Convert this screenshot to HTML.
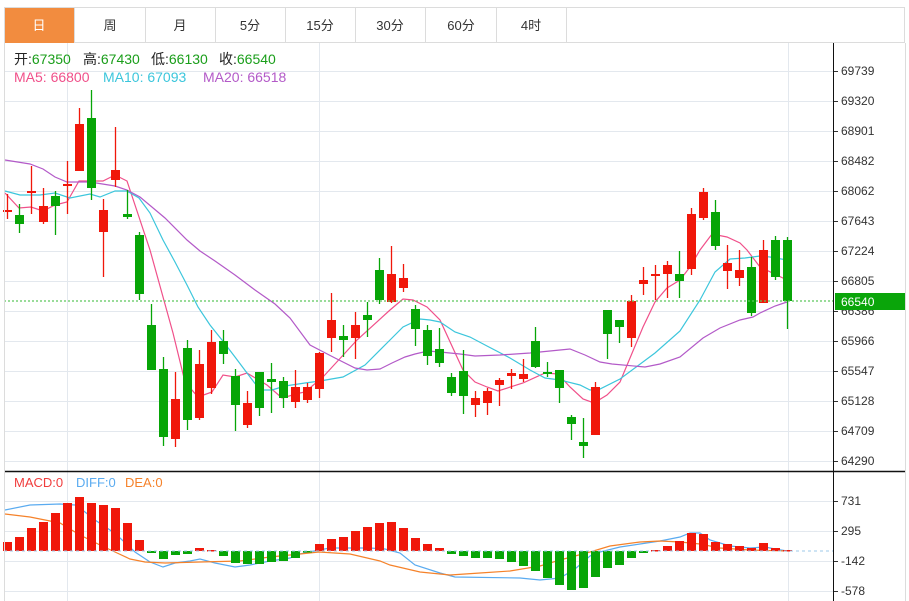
<!DOCTYPE html>
<html><head><meta charset="utf-8"><style>
html,body{margin:0;padding:0;background:#fff;width:909px;height:601px;overflow:hidden;font-family:"Liberation Sans","Noto Sans CJK SC",sans-serif;}
svg{position:absolute;left:0;top:0}
</style></head><body>
<svg id="s" width="909" height="601" xmlns="http://www.w3.org/2000/svg" font-family="Liberation Sans, Noto Sans CJK SC, sans-serif">
<g id="grid" stroke="#e3e8ee" stroke-width="1"></g>
<g id="tabs" font-size="13" text-anchor="middle" fill="#333">
<rect x="4.5" y="7.5" width="900" height="35" fill="#fff" stroke="#dcdcdc"/>
<rect x="5" y="8" width="69" height="35" fill="#f28c3f"/>
<line x1="74.5" y1="8" x2="74.5" y2="43" stroke="#dcdcdc"/>
<line x1="145.5" y1="8" x2="145.5" y2="43" stroke="#dcdcdc"/>
<line x1="215.5" y1="8" x2="215.5" y2="43" stroke="#dcdcdc"/>
<line x1="285.5" y1="8" x2="285.5" y2="43" stroke="#dcdcdc"/>
<line x1="355.5" y1="8" x2="355.5" y2="43" stroke="#dcdcdc"/>
<line x1="425.5" y1="8" x2="425.5" y2="43" stroke="#dcdcdc"/>
<line x1="496.5" y1="8" x2="496.5" y2="43" stroke="#dcdcdc"/>
<line x1="566.5" y1="8" x2="566.5" y2="43" stroke="#dcdcdc"/>
<text x="39" y="30" fill="#fff">日</text>
<text x="110" y="30">周</text>
<text x="180" y="30">月</text>
<text x="250" y="30">5分</text>
<text x="320" y="30">15分</text>
<text x="390" y="30">30分</text>
<text x="461" y="30">60分</text>
<text x="531" y="30">4时</text>
</g>
<g id="ma" fill="none" stroke-width="1.2"></g>
<g id="cd"></g>
<line x1="4" y1="301" x2="833" y2="301" stroke="#5cc85c" stroke-width="1.2" stroke-dasharray="2,2"/>
<line x1="4" y1="551" x2="833" y2="551" stroke="#9cc8e8" stroke-width="1" stroke-dasharray="3,3"/>
<line x1="4" y1="471.5" x2="905" y2="471.5" stroke="#111" stroke-width="1.5"/>
<line x1="833.5" y1="43" x2="833.5" y2="601" stroke="#111"/>
<line x1="905.5" y1="43" x2="905.5" y2="601" stroke="#dcdcdc"/>
<line x1="4.5" y1="43" x2="4.5" y2="601" stroke="#dcdcdc"/>
<g font-size="12" fill="#333" id="ax">
<text x="841" y="75">69739</text><text x="841" y="105">69320</text><text x="841" y="135">68901</text><text x="841" y="165">68482</text><text x="841" y="195">68062</text><text x="841" y="225">67643</text><text x="841" y="255">67224</text><text x="841" y="285">66805</text><text x="841" y="315">66386</text><text x="841" y="345">65966</text><text x="841" y="375">65547</text><text x="841" y="405">65128</text><text x="841" y="435">64709</text><text x="841" y="465">64290</text>
<text x="841" y="505">731</text><text x="841" y="535">295</text><text x="841" y="565">-142</text><text x="841" y="595">-578</text>
</g>
<rect x="835" y="293" width="70" height="17" fill="#0aa50a"/>
<text x="841" y="306" font-size="12" fill="#fff">66540</text>
<g font-size="14">
<text x="14" y="64" fill="#222">开:<tspan fill="#1a9e1a">67350</tspan></text>
<text x="83" y="64" fill="#222">高:<tspan fill="#1a9e1a">67430</tspan></text>
<text x="151" y="64" fill="#222">低:<tspan fill="#1a9e1a">66130</tspan></text>
<text x="219" y="64" fill="#222">收:<tspan fill="#1a9e1a">66540</tspan></text>
<text x="14" y="82" fill="#f0508a">MA5: 66800</text>
<text x="103" y="82" fill="#3cc6dc">MA10: 67093</text>
<text x="203" y="82" fill="#b35ac8">MA20: 66518</text>
</g>
<g font-size="13">
<text x="14" y="487" fill="#f03c3c">MACD:0</text>
<text x="76" y="487" fill="#5aabf0">DIFF:0</text>
<text x="125" y="487" fill="#f5822a">DEA:0</text>
</g>
</svg>
<script>
var NS="http://www.w3.org/2000/svg";
function el(p,t,a){var e=document.createElementNS(NS,t);for(var k in a)e.setAttribute(k,a[k]);p.appendChild(e);return e;}
var g=document.getElementById('grid');
[71,101,131,161,191,221,251,281,311,341,371,401,431,461,501,531,561,591].forEach(function(y){el(g,'line',{x1:4,y1:y+.5,x2:833,y2:y+.5});el(g,'line',{x1:833,y1:y+.5,x2:838,y2:y+.5,stroke:'#333'});});
[67,319,788].forEach(function(x){el(g,'line',{x1:x+.5,y1:43,x2:x+.5,y2:601});});
var R='#f0170a',G='#07a507';
var C=[['r',210,212,194,219],['g',215,224,204,233],['r',191,193,166,214],['r',206,222,188,224],['g',196,206,191,235],['r',184,186,161,214],
['r',124,171,108,171],['g',118,188,90,200],['r',210,232,199,277],['r',170,180,127,187],['g',214,217,190,219],['g',235,294,232,300],
['g',325,370,304,370],['g',369,437,357,446],['r',399,439,372,447],['g',348,420,340,430],['r',364,418,350,420],['r',342,388,330,394],
['g',341,354,330,364],['g',376,405,369,431],['r',403,425,391,428],['g',372,408,372,416],['g',379,382,363,413],['g',381,398,377,408],
['r',387,402,370,408],['r',387,400,383,403],['r',353,389,352,398],['r',320,338,293,352],['g',336,340,325,357],['r',325,338,312,359],
['g',315,320,302,337],['g',270,300,258,304],['r',274,302,246,303],['r',278,288,264,292],['g',309,329,305,346],['g',330,356,325,365],
['g',349,363,328,367],['g',377,393,373,396],['g',371,396,350,414],['r',398,405,391,417],['r',391,403,388,415],['r',380,385,378,406],
['r',373,376,369,389],['r',374,379,359,382],['g',341,367,327,368],['g',372,374,362,377],['g',370,388,370,403],['g',417,424,415,440],
['g',442,446,418,458],['r',387,435,382,435],['g',310,334,310,359],['g',320,327,320,343],['r',301,338,295,347],['r',280,284,267,295],
['r',274,276,265,300],['r',265,274,261,298],['g',274,281,251,298],['r',214,269,208,275],['r',192,218,188,220],['g',212,246,200,250],
['r',263,271,245,289],['r',270,278,250,286],['g',267,313,257,316],['r',250,303,240,303],['g',240,277,236,280],['g',240,301,237,329]];
var cd=document.getElementById('cd');
C.forEach(function(c,i){var x=7+12*i,col=c[0]=='r'?R:G;
el(cd,'line',{x1:x+.5,y1:c[3],x2:x+.5,y2:c[4],stroke:col,'stroke-width':1.3});
el(cd,'rect',{x:x-4,y:c[1],width:9,height:Math.max(2,c[2]-c[1]),fill:col});});
var M=[542,537,528,522,513,503,497,503,505,508,523,540,553,559,555,554,548,550,556,563,564,564,562,561,558,552,544,539,537,531,527,523,522,528,538,544,548,554,556,558,558,559,562,566,571,578,585,590,588,577,568,565,558,553,550,546,541,533,534,542,544,546,548,543,548,550];
M.forEach(function(v,i){var x=7+12*i;var h=Math.abs(v-551);if(h<1.5)h=1.5;
el(cd,'rect',{x:x-4,y:v<551?v:551,width:9,height:h,fill:v<=551?R:G});});
var ma=document.getElementById('ma');
function pl(pts,col){el(ma,'polyline',{points:pts,stroke:col});}
pl("5,193 19,208 31,207 43,211 55,205 67,202 79,181 91,181 103,181 115,175 127,181 150,250 173,333 185,382 198,397 212,392 223,375 235,377 247,373 267,385 282,398 300,393 305,392 323,377 357,340 390,310 403,299 413,300 427,307 440,320 463,370 475,382 487,387 498,391 523,383 545,373 558,374 570,387 583,399 594,403 607,395 620,382 643,327 655,302 667,288 680,280 690,267 700,250 712,234 727,237 740,243 747,250 760,267 787,280","#f0508a");
pl("5,191 20,195 40,195 55,193 70,198 90,194 100,197 115,191 127,191 139,198 150,213 163,240 175,262 187,285 198,307 210,325 222,340 235,357 247,373 260,390 272,390 285,386 305,383 320,381 343,377 365,365 390,340 403,327 420,319 430,320 440,322 455,332 470,337 487,346 510,358 530,370 545,378 560,380 580,385 590,390 600,389 620,379 655,353 680,331 700,300 715,272 730,259 745,258 760,256 770,257 787,260","#3cc6dc");
pl("5,160 30,164 43,169 55,177 67,182 90,182 115,186 127,190 140,197 165,218 187,240 200,251 215,261 235,275 255,290 275,304 290,318 310,345 335,358 355,368 367,370 380,369 392,363 405,357 415,354 428,351 440,352 460,354 475,356 500,355 530,353 560,350 570,349 585,355 600,362 612,364 645,367 660,364 680,357 703,338 720,328 740,320 753,317 760,313 775,306 787,302","#b35ac8");
pl("5,510 30,505 60,504 75,505 80,508 95,520 110,530 120,538 135,552 150,562 163,567 175,563 190,561 200,559 215,563 235,567 250,565 270,561 290,558 300,554 319,550 330,548 370,548 385,549 400,553 415,565 440,573 455,577 520,578 540,580 560,578 575,569 590,556 600,552 620,547 640,544 660,541 680,537 690,533 700,533 710,540 730,546 750,548 765,547 775,549 787,551","#5aabf0");
pl("5,514 30,517 60,523 80,535 100,545 115,552 130,559 145,562 165,563 200,562 240,561 270,557 300,554 319,552 350,554 380,561 390,565 420,572 450,575 480,573 510,571 540,566 560,560 590,552 610,546 640,542 660,541 680,542 700,544 720,548 750,550 787,551","#f5822a");
</script>
</body></html>
